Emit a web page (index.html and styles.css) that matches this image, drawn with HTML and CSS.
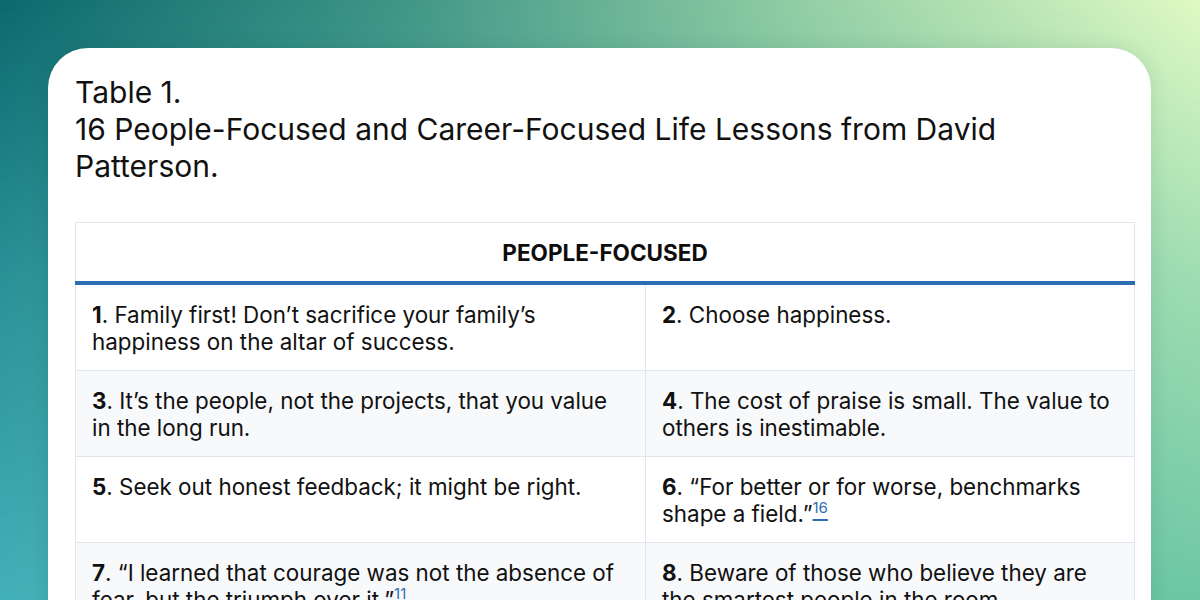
FILE: index.html
```html
<!DOCTYPE html>
<html lang="en">
<head>
<meta charset="utf-8">
<title>Table 1 — Life Lessons from David Patterson</title>
<link rel="stylesheet" href="styles.css">
</head>
<body>
<div class="page">
  <div class="card">
    <h1 class="caption">Table 1.<br>16 People-Focused and Career-Focused Life Lessons from David Patterson.</h1>
    <table class="lessons">
      <colgroup><col class="col-left"><col class="col-right"></colgroup>
      <thead>
        <tr><th colspan="2">PEOPLE-FOCUSED</th></tr>
      </thead>
      <tbody>
        <tr>
          <td><b>1</b>. Family first! Don’t sacrifice your family’s happiness on the altar of success.</td>
          <td><b>2</b>. Choose happiness.</td>
        </tr>
        <tr class="alt">
          <td><b>3</b>. It’s the people, not the projects, that you value in the long run.</td>
          <td><b>4</b>. The cost of praise is small. The value to others is inestimable.</td>
        </tr>
        <tr>
          <td><b>5</b>. Seek out honest feedback; it might be right.</td>
          <td><b>6</b>. “For better or for worse, benchmarks shape a field.”<sup><a class="ref">16</a></sup></td>
        </tr>
        <tr class="alt">
          <td><b>7</b>. “I learned that courage was not the absence of fear, but the triumph over it.”<sup><a class="ref">11</a></sup></td>
          <td><b>8</b>. Beware of those who believe they are the smartest people in the room.</td>
        </tr>
      </tbody>
    </table>
  </div>
</div>
</body>
</html>
```
FILE: styles.css
```css
html, body {
  margin: 0;
  padding: 0;
}
body {
  font-family: Inter, "Noto Sans", "Liberation Sans", sans-serif;
  color: #111;
}
.page {
  position: relative;
  width: 1200px;
  height: 600px;
  overflow: hidden;
  box-sizing: border-box;
  padding: 48px 49px 0 48px;
  background: linear-gradient(to right, #0c6a6e 0%, #3f9586 33%, #93cfa5 67%, #e0fac4 100%);
}
.page::before {
  content: "";
  position: absolute;
  inset: 0;
  background: linear-gradient(to right, #43b0b8 0%, #55b7b0 40%, #6cc6a3 100%);
  -webkit-mask-image: linear-gradient(to bottom, transparent 0%, rgba(0,0,0,0.55) 45%, #000 100%);
  mask-image: linear-gradient(to bottom, transparent 0%, rgba(0,0,0,0.55) 45%, #000 100%);
}
.card {
  position: relative;
  z-index: 1;
  background: #fff;
  border-radius: 40px 40px 0 0;
  padding: 26px 17px 40px 27px;
  min-height: 600px;
  box-shadow: 0 0 20px rgba(0, 40, 30, 0.10);
}
.caption {
  margin: 0 0 37px 0;
  font-size: 30px;
  line-height: 37px;
  font-weight: 400;
  color: #111;
}
.lessons {
  width: 1059px;
  border-collapse: collapse;
  table-layout: fixed;
  font-size: 22.4px;
  line-height: 27px;
  border: 1px solid #dfe5ee;
}
.col-left { width: 570px; }
.col-right { width: 489px; }
.lessons th {
  font-weight: 700;
  font-size: 22.5px;
  text-align: center;
  padding: 16px 16px 15px;
  border-bottom: 4px solid #2c6db0;
  color: #0d0d0d;
}
.lessons td {
  vertical-align: top;
  text-align: left;
  padding: 16px 16px 15px;
  border: 1px solid #e0e5ee;
  color: #111;
}
.lessons td b {
  font-weight: 700;
}
.lessons tr.alt td {
  background: #f8f9fb;
}
.lessons sup {
  font-size: 15px;
  line-height: 0;
  vertical-align: 9px;
}
.ref {
  color: #2f6db3;
  text-decoration: underline;
  text-underline-offset: 6px;
  text-decoration-thickness: 2px;
}
```
